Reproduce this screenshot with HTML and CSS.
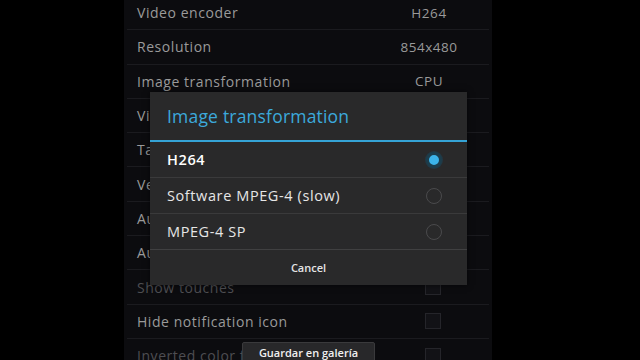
FILE: index.html
```html
<!DOCTYPE html>
<html lang="en">
<head>
  <meta charset="UTF-8" />
  <meta name="viewport" content="width=device-width, initial-scale=1.0"/>
  <title>Settings</title>
  <link rel="stylesheet" href="styles.css">
</head>
<body>
  <div class="screen">
    <div class="settings">
      <div class="row"><span class="label">Video encoder</span><span class="value">H264</span></div>
      <div class="row"><span class="label">Resolution</span><span class="value">854x480</span></div>
      <div class="row"><span class="label">Image transformation</span><span class="value">CPU</span></div>
      <div class="row"><span class="label">Video bitrate</span><span class="value">4 Mbps</span></div>
      <div class="row"><span class="label">Target frame rate</span><span class="value">30</span></div>
      <div class="row"><span class="label">Vertical orientation</span><span class="value">Auto</span></div>
      <div class="row"><span class="label">Audio source</span><span class="value">Mic</span></div>
      <div class="row"><span class="label">Audio sampling rate</span><span class="value">16 kHz</span></div>
      <div class="row dim"><span class="label">Show touches</span><span class="check"></span></div>
      <div class="row"><span class="label">Hide notification icon</span><span class="check"></span></div>
      <div class="row dim"><span class="label">Inverted color fix</span><span class="check"></span></div>
    </div>

    <div class="dialog">
      <div class="dialog-title">Image transformation</div>
      <div class="option selected"><span>H264</span><span class="radio checked"></span></div>
      <div class="option"><span>Software MPEG-4 (slow)</span><span class="radio"></span></div>
      <div class="option"><span>MPEG-4 SP</span><span class="radio"></span></div>
      <div class="dialog-cancel">Cancel</div>
    </div>

    <div class="toast">Guardar en galería</div>
  </div>
</body>
</html>
```

FILE: styles.css
```css
body {
  margin: 0;
  background: #000;
  font-family: 'Open Sans', 'Noto Sans', sans-serif;
  overflow: hidden;
}

.screen {
  position: relative;
  width: 368px;
  height: 360px;
  margin-left: 124px;
  background: #0c0c0f;
  overflow: hidden;
}

.settings {
  margin-top: -4px;
}

.row {
  display: flex;
  align-items: center;
  height: 33.3px;
  margin: 0 3px;
  padding-left: 10px;
  border-bottom: 1px solid #1b1b1f;
  color: #9a9a9a;
  font-size: 14px;
  letter-spacing: 0.55px;
}

.row.dim {
  color: #4e4e52;
}

.label {
  flex: 1;
}

.value {
  width: 80px;
  text-align: center;
  padding-right: 20px;
  font-size: 13.5px;
}

.check {
  width: 14px;
  height: 14px;
  margin-right: 48px;
  border: 1px solid #25252a;
  background: #121216;
}

.dialog {
  position: absolute;
  left: 26px;
  top: 92px;
  width: 317px;
  background: #29292a;
  box-shadow: 0 0 6px rgba(0,0,0,0.6);
}

.dialog-title {
  height: 48px;
  line-height: 48px;
  padding-left: 17px;
  color: #3ca9dc;
  font-size: 17.5px;
  letter-spacing: 0.2px;
  border-bottom: 2px solid #35a3d6;
}

.option {
  display: flex;
  align-items: center;
  justify-content: space-between;
  height: 35px;
  padding: 0 25px 0 17px;
  border-bottom: 1px solid #3a3a3b;
  color: #e6e6e6;
  font-size: 14.5px;
  letter-spacing: 0.6px;
}

.option.selected {
  color: #fff;
  font-weight: 600;
}

.radio {
  width: 16px;
  height: 16px;
  border: 1.5px solid #4a4a4c;
  border-radius: 50%;
  box-sizing: border-box;
}

.radio.checked {
  border: 3px solid #1c3d4c;
  background: #3cb4ea;
  box-shadow: 0 0 0 1px #233843;
}

.dialog-cancel {
  height: 35px;
  line-height: 35px;
  text-align: center;
  color: #e4e4e4;
  font-size: 11px;
  font-weight: 600;
  border-top: 1px solid #404041;
  margin-top: -1px;
}

.toast {
  position: absolute;
  left: 118px;
  top: 342px;
  width: 133px;
  height: 30px;
  box-sizing: border-box;
  padding-top: 2px;
  text-align: center;
  background: #28282a;
  border: 1px solid #3a3a3c;
  border-radius: 2px;
  color: #f0f0f0;
  font-size: 11px;
  font-weight: 600;
}
```
